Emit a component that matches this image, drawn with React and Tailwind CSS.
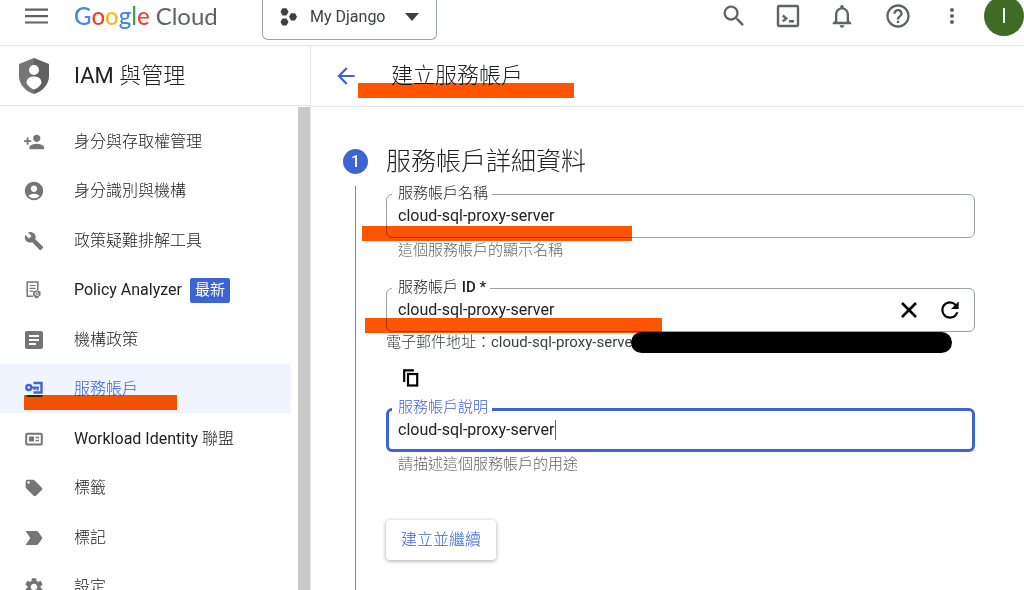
import React, { useState } from 'react';
import {
  MdAccountCircle,
  MdArrowBack,
  MdArticle,
  MdBuild,
  MdHelpOutline,
  MdLabelImportant,
  MdLocalOffer,
  MdMoreVert,
  MdNotificationsNone,
  MdPersonAdd,
  MdRefresh,
  MdSearch,
  MdSettings,
} from 'react-icons/md';

const MenuIcon = () => (
  <svg viewBox="0 0 24 24" className="size-6" stroke="#5f6368" strokeWidth="2.200">
    <path d="M1 9.200h23M1 15.700h23M1 22h23" transform="translate(0 -3.500)" />
  </svg>
);

const CloseIcon = () => (
  <svg viewBox="0 0 24 24" className="size-6" stroke="#000" strokeWidth="2.600">
    <path d="M5 5l14 14M19 5L5 19" />
  </svg>
);

const CopyIcon = () => (
  <svg viewBox="0 0 20 20" className="size-5" fill="none" stroke="#000" strokeWidth="2.200">
    <path d="M3.200 14V2.300H13" />
    <rect x="7" y="6" width="9.200" height="11.500" />
  </svg>
);

const ShieldIcon = () => (
  <svg viewBox="0 0 30 36" className="h-9 w-[30px]">
    <path d="M15 0 0 6v12c0 8 6 15.500 15 18z" fill="#757575" />
    <path d="M15 0l15 6v12c0 8-6 15.500-15 18z" fill="#616161" />
    <circle cx="15" cy="12" r="5" fill="#fff" />
    <path d="M7.500 25c0-4.500 3.300-6.500 7.500-6.500s7.500 2 7.500 6.500c-1.500 3-4.300 5.500-7.500 6.500-3.200-1-6-3.500-7.500-6.500z" fill="#fff" />
  </svg>
);

const ProjectIcon = () => (
  <svg viewBox="0 0 18 18" className="size-[18px]" fill="#3c4043">
    <path d="M2.500.2h4l2 3.600-2 3.600h-4l-2-3.600z" />
    <path d="M2.500 10.400h4l2 3.600-2 3.600h-4l-2-3.600z" />
    <path d="M11 5.200h4l2 3.600-2 3.600h-4L9 8.800z" />
  </svg>
);

const ShellIcon = () => (
  <svg viewBox="0 0 24 24" className="size-6" fill="none" stroke="#5f6368" strokeWidth="2.400">
    <rect x="2" y="2" width="20" height="20" rx="1.200" />
    <path d="M6.800 11.500l3.400 2.900-3.400 2.900M13 17.300h5" />
  </svg>
);

const PolicyIcon = () => (
  <svg viewBox="0 0 20 20" className="size-5" fill="none" stroke="#757575">
    <path d="M9 16.200H3.200V2h10.600v8" strokeWidth="1.500" />
    <path d="M5.500 5.500h6M5.500 8.300h6M5.500 11.100h3.500" strokeWidth="1.200" />
    <path d="M12.800 10.200l3.700 1.300v2.800c0 2-1.500 3.400-3.700 4.200-2.200-.8-3.700-2.200-3.700-4.200v-2.800z" fill="#757575" stroke="none" />
    <circle cx="12.600" cy="13.800" r="1.500" stroke="#fff" />
    <path d="M13.700 15l2 2" stroke="#fff" />
  </svg>
);

const ServiceAccountIcon = () => (
  <svg viewBox="0 0 20 20" className="size-5" fill="none" stroke="#3c64d4">
    <circle cx="4.800" cy="8.500" r="2.500" strokeWidth="2.400" />
    <path d="M7.500 8.500H15M13.500 8.500v3M10.500 8.500v2.500" strokeWidth="2" />
    <path d="M9.500 4H17.500V13.500H9.500" strokeWidth="2.400" />
    <path d="M2.500 17h16" strokeWidth="2" />
  </svg>
);

const WorkloadIcon = () => (
  <svg viewBox="0 0 20 20" className="size-5" fill="none" stroke="#757575">
    <rect x="2.200" y="4.700" width="15.600" height="10.800" rx="1" strokeWidth="2" />
    <path d="M5 7.500h5v5H5z" fill="#757575" stroke="none" />
    <path d="M11.500 8.500H15M11.500 11.500H15" strokeWidth="1.500" />
  </svg>
);

const navItems = [
  { label: '身分與存取權管理', icon: <MdPersonAdd className="size-[22px] text-[#757575]" /> },
  { label: '身分識別與機構', icon: <MdAccountCircle className="size-[22px] text-[#757575]" /> },
  { label: '政策疑難排解工具', icon: <MdBuild className="size-5 text-[#757575]" /> },
  { latin: 'Policy Analyzer', label: '', icon: <PolicyIcon />, badge: '最新' },
  { label: '機構政策', icon: <MdArticle className="size-6 text-[#757575]" /> },
  { label: '服務帳戶', icon: <ServiceAccountIcon />, active: true },
  { latin: 'Workload Identity ', label: '聯盟', icon: <WorkloadIcon /> },
  { label: '標籤', icon: <MdLocalOffer className="size-5 text-[#757575]" /> },
  { label: '標記', icon: <MdLabelImportant className="size-6 text-[#757575]" /> },
  { label: '設定', icon: <MdSettings className="size-[22px] text-[#757575]" /> },
];

// Highlighter stroke laid over the page
const Marker = ({ className }) => (
  <span className={`pointer-events-none absolute z-10 h-[15px] bg-[#ff5500] mix-blend-multiply ${className}`} />
);

const Field = ({ id, label, latin, value, onChange, focused, children }) => (
  <div
    className={`relative flex h-11 items-center rounded-md ${
      focused ? 'border-3 border-[#3c64d4] pl-[9px]' : 'border border-[#9aa0a6] pl-[11px]'
    }`}
  >
    <label
      htmlFor={id}
      className={`absolute bg-white pl-1.5 pr-1 text-[15px] leading-5 ${
        focused ? '-top-[14px] left-[3px] text-[#3c64d4]' : '-top-3 left-[5px] text-[#202124]'
      }`}
    >
      <span className="font-light">{label}</span>
      {latin && <span className="font-medium"> {latin}</span>}
    </label>
    <input
      id={id}
      type="text"
      value={value}
      onChange={(e) => onChange(e.target.value)}
      className="min-w-0 flex-1 bg-transparent text-base text-[#202124] outline-none"
    />
    {children}
  </div>
);

const App = () => {
  const [name, setName] = useState('cloud-sql-proxy-server');
  const [accountId, setAccountId] = useState('cloud-sql-proxy-server');
  const [description, setDescription] = useState('cloud-sql-proxy-server');

  return (
    <div className="flex h-screen flex-col overflow-hidden bg-white font-['Roboto','Noto_Sans_CJK_TC',sans-serif] text-[#202124]">
      {/* Top bar */}
      <header className="h-[46px] shrink-0 border-b border-[#e4e4e4]">
        <div className="flex h-8 items-center pl-6">
          <button type="button" aria-label="選單">
            <MenuIcon />
          </button>
          <a href="#" className="ml-[26px] flex w-[188px] gap-1.5 whitespace-nowrap font-['Lato',sans-serif] text-2xl leading-8">
            <span className="font-medium">
              <span className="text-[#4285f4]">G</span>
              <span className="text-[#ea4335]">o</span>
              <span className="text-[#fbbc04]">o</span>
              <span className="text-[#4285f4]">g</span>
              <span className="text-[#34a853]">l</span>
              <span className="text-[#ea4335]">e</span>
            </span>
            <span className="text-[#5f6368]">Cloud</span>
          </a>
          <button
            type="button"
            className="flex h-10 w-[175px] items-center self-start rounded-b-md border border-t-0 border-[#9aa0a6] pb-1.5 pl-[17px] text-base text-[#3c4043]"
          >
            <ProjectIcon />
            <span className="ml-3">My Django</span>
            <svg viewBox="0 0 14 8" className="ml-5 h-2 w-3.5">
              <path d="M0 0h14L7 8z" fill="#3c4043" />
            </svg>
          </button>
          <div className="ml-auto flex items-center gap-7 text-[#5f6368]">
            <button type="button" aria-label="搜尋"><MdSearch className="size-7" /></button>
            <button type="button" aria-label="Cloud Shell"><ShellIcon /></button>
            <button type="button" aria-label="通知"><MdNotificationsNone className="size-7" /></button>
            <button type="button" aria-label="說明"><MdHelpOutline className="size-7" /></button>
            <button type="button" aria-label="更多"><MdMoreVert className="size-6" /></button>
          </div>
          <button type="button" className="ml-5 size-10 shrink-0 rounded-full bg-[#3f6b26] text-xl text-white">
            I
          </button>
        </div>
      </header>

      <div className="flex min-h-0 flex-1">
        {/* Side navigation */}
        <aside className="flex w-[311px] shrink-0 flex-col border-r border-[#e4e4e4]">
          <div className="flex h-[60px] shrink-0 items-center gap-[25px] border-b border-[#e4e4e4] pl-[19px]">
            <ShieldIcon />
            <h2 className="text-[22px]">
              IAM <span className="font-light">與管理</span>
            </h2>
          </div>
          <div className="flex min-h-0 flex-1">
            <nav className="min-w-0 flex-1 overflow-hidden pr-[7px] pt-[10px]">
              <ul className="grid h-[495px] auto-rows-fr">
                {navItems.map((item) => (
                  <li key={item.label + item.latin} className={item.active ? 'relative bg-[#f0f4fe]' : ''}>
                    <a
                      href="#"
                      className={`flex h-full items-center pl-[23px] pt-0.5 text-base ${item.active ? 'text-[#3c64d4]' : ''}`}
                    >
                      <span className="mr-[29px] flex w-[22px] justify-center">
                        <span className="shrink-0">{item.icon}</span>
                      </span>
                      <span className="whitespace-pre">
                        {item.latin}
                        <span className="font-light">{item.label}</span>
                      </span>
                      {item.badge && (
                        <span className="ml-2 rounded-xs bg-[#3c64d4] px-[5px] text-[15px] leading-[25px] text-white">
                          {item.badge}
                        </span>
                      )}
                    </a>
                    {item.active && <Marker className="left-6 top-[31px] w-[153px]" />}
                  </li>
                ))}
              </ul>
            </nav>
            <div className="mt-px w-3 bg-[#c9c9c9]" />
          </div>
        </aside>

        <main className="flex min-w-0 flex-1 flex-col">
          <div className="relative flex h-[61px] shrink-0 items-center gap-8 border-b border-[#e4e4e4] pl-[22px]">
            <a href="#" aria-label="返回">
              <MdArrowBack className="size-[26px] text-[#3c64d4]" />
            </a>
            <h1 className="pb-0.5 text-[22px] font-light">建立服務帳戶</h1>
            <Marker className="left-[47px] top-[37px] w-[216px]" />
          </div>

          <div className="flex flex-1 gap-[18px] pl-8 pr-[49px] pt-[42px]">
            {/* Step marker */}
            <div className="flex flex-col items-center">
              <span className="flex size-[25px] items-center justify-center rounded-full bg-[#3c64d4] text-base font-medium text-white">
                1
              </span>
              <span className="mt-3 w-px flex-1 bg-[#80868b]" />
            </div>

            <form className="min-w-0 flex-1" onSubmit={(e) => e.preventDefault()}>
              <h2 className="text-[25px] font-light leading-[25px]">服務帳戶詳細資料</h2>

              <div className="relative mt-5">
                <Field id="name" label="服務帳戶名稱" value={name} onChange={setName} />
                <p className="pl-3 text-[15px] font-light leading-6 text-[#5f6368]">這個服務帳戶的顯示名稱</p>
                <Marker className="-left-6 top-8 w-[270px]" />
              </div>

              <div className="relative mt-[26px]">
                <Field id="account-id" label="服務帳戶" latin="ID *" value={accountId} onChange={setAccountId}>
                  <button type="button" aria-label="清除" onClick={() => setAccountId('')}>
                    <CloseIcon />
                  </button>
                  <button type="button" aria-label="重新產生" className="ml-4 mr-[11px]">
                    <MdRefresh className="size-[26px] text-black" />
                  </button>
                </Field>
                <p className="whitespace-nowrap text-[15px] leading-5 text-[#3c4043]">
                  <span className="font-light">電子郵件地址：</span>cloud-sql-proxy-server
                </p>
                <span className="absolute left-[245px] top-11 h-[21px] w-[321px] rounded-full bg-black" />
                <Marker className="-left-[21px] top-[30px] w-[297px]" />
              </div>

              <button type="button" aria-label="複製" className="ml-[15px] mt-4 block">
                <CopyIcon />
              </button>

              <div className="relative mt-5">
                <Field id="description" label="服務帳戶說明" value={description} onChange={setDescription} focused />
                <span className="absolute left-[169px] top-3 h-5 w-px bg-[#3c64d4]" />
                <p className="pl-3 text-[15px] font-light leading-6 text-[#5f6368]">請描述這個服務帳戶的用途</p>
              </div>

              <button
                type="submit"
                className="mt-11 h-10 rounded-sm bg-white px-[15px] text-base font-light text-[#3c64d4] shadow-[0_1px_4px_rgba(0,0,0,0.35)]"
              >
                建立並繼續
              </button>
            </form>
          </div>
        </main>
      </div>
    </div>
  );
};

export default App;
